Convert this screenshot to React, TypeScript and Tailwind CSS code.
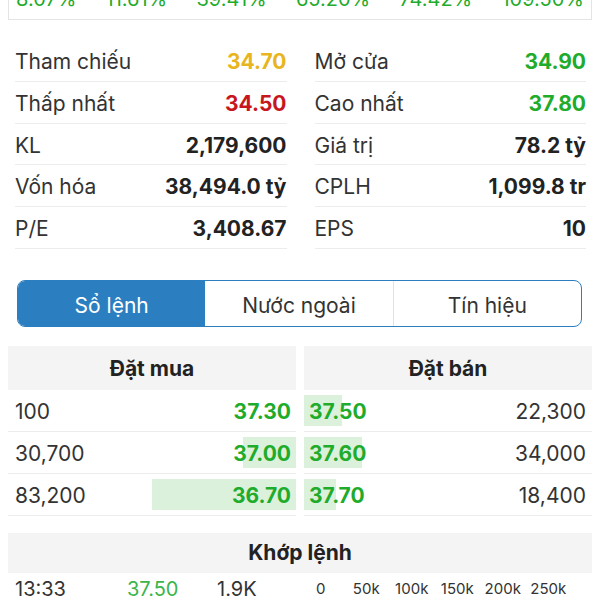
import React from "react";

const GREEN = "text-[#1fab2b]";

function InfoCell({ label, value, color }: { label: string; value: string; color: string }) {
  return (
    <div className="h-[41.75px] border-b border-[#ececec] flex items-center justify-between pt-[3px]">
      <span className="text-[21px] text-[#333333]">{label}</span>
      <span className={`text-[21px] font-bold ${color}`}>{value}</span>
    </div>
  );
}

function BuyRow({ vol, price, bar }: { vol: string; price: string; bar: number }) {
  return (
    <div className="relative h-[42px] border-b border-[#ececec] flex items-center justify-between pl-[7px] pr-[5px] pt-[3px]">
      {bar > 0 && (
        <div className="absolute right-0 top-[5px] bottom-[5px] bg-[#dcf1dc]" style={{ width: bar }} />
      )}
      <span className="relative text-[21px] text-[#333333]">{vol}</span>
      <span className={`relative text-[21px] font-bold ${GREEN}`}>{price}</span>
    </div>
  );
}

function SellRow({ vol, price, bar }: { vol: string; price: string; bar: number }) {
  return (
    <div className="relative h-[42px] border-b border-[#ececec] flex items-center justify-between pl-[5px] pr-[6px] pt-[3px]">
      {bar > 0 && (
        <div className="absolute left-0 top-[5px] bottom-[5px] bg-[#dcf1dc]" style={{ width: bar }} />
      )}
      <span className={`relative text-[21px] font-bold ${GREEN}`}>{price}</span>
      <span className="relative text-[21px] text-[#333333]">{vol}</span>
    </div>
  );
}

export default function App() {
  const pcts = ["8.07%", "11.61%", "39.41%", "65.20%", "74.42%", "109.50%"];
  return (
    <div
      className="w-[600px] h-[600px] overflow-hidden bg-white"
      style={{ fontFamily: "Inter, 'Noto Sans', sans-serif" }}
    >
      <div className="mx-[8px] mt-[-14px] h-[34px] border border-[#e4e4e4] flex justify-between px-[7px]">
        {pcts.map((p) => (
          <span key={p} className={`text-[20px] leading-[24px] ${GREEN}`}>
            {p}
          </span>
        ))}
      </div>

      <div className="mt-[20px] grid grid-cols-2 gap-x-[28px] pl-[15px] pr-[14px]">
        <InfoCell label="Tham chiếu" value="34.70" color="text-[#e8b520]" />
        <InfoCell label="Mở cửa" value="34.90" color={GREEN} />
        <InfoCell label="Thấp nhất" value="34.50" color="text-[#c8161d]" />
        <InfoCell label="Cao nhất" value="37.80" color={GREEN} />
        <InfoCell label="KL" value="2,179,600" color="text-[#222222]" />
        <InfoCell label="Giá trị" value="78.2 tỷ" color="text-[#222222]" />
        <InfoCell label="Vốn hóa" value="38,494.0 tỷ" color="text-[#222222]" />
        <InfoCell label="CPLH" value="1,099.8 tr" color="text-[#222222]" />
        <InfoCell label="P/E" value="3,408.67" color="text-[#222222]" />
        <InfoCell label="EPS" value="10" color="text-[#222222]" />
      </div>

      <div className="mt-[31px] ml-[17px] mr-[18px] h-[47px] border-[1.5px] border-[#2b7fc1] rounded-[8px] overflow-hidden flex">
        <div className="flex-1 bg-[#2b7fc1] text-white text-[21px] flex items-center justify-center pt-[4px]">Sổ lệnh</div>
        <div className="flex-1 text-[#333333] text-[21px] flex items-center justify-center border-r border-[#e2e2e2] pt-[4px]">
          Nước ngoài
        </div>
        <div className="flex-1 text-[#333333] text-[21px] flex items-center justify-center pt-[4px]">Tín hiệu</div>
      </div>

      <div className="mt-[19px] px-[8px] grid grid-cols-2 gap-x-[8px]">
        <div>
          <div className="h-[44px] bg-[#f4f4f4] flex items-center justify-center text-[21px] font-bold text-[#222222] pt-[1px]">
            Đặt mua
          </div>
          <BuyRow vol="100" price="37.30" bar={0} />
          <BuyRow vol="30,700" price="37.00" bar={53} />
          <BuyRow vol="83,200" price="36.70" bar={144} />
        </div>
        <div>
          <div className="h-[44px] bg-[#f4f4f4] flex items-center justify-center text-[21px] font-bold text-[#222222] pt-[1px]">
            Đặt bán
          </div>
          <SellRow vol="22,300" price="37.50" bar={38} />
          <SellRow vol="34,000" price="37.60" bar={58} />
          <SellRow vol="18,400" price="37.70" bar={32} />
        </div>
      </div>

      <div className="mt-[17px] mx-[8px] h-[40px] bg-[#f4f4f4] flex items-center justify-center text-[21px] font-bold text-[#222222]">
        Khớp lệnh
      </div>

      <div className="h-[30px] flex items-center pl-[15px] pt-[3px]">
        <span className="w-[112px] text-[20px] text-[#333333]">13:33</span>
        <span className="w-[90px] text-[20px] text-[#3cb54a]">37.50</span>
        <span className="w-[81px] text-[20px] text-[#333333]">1.9K</span>
        <div className="flex">
          {["0", "50k", "100k", "150k", "200k", "250k"].map((t) => (
            <span key={t} className="w-[45.5px] text-center text-[15px] text-[#333333]">
              {t}
            </span>
          ))}
        </div>
      </div>
    </div>
  );
}
